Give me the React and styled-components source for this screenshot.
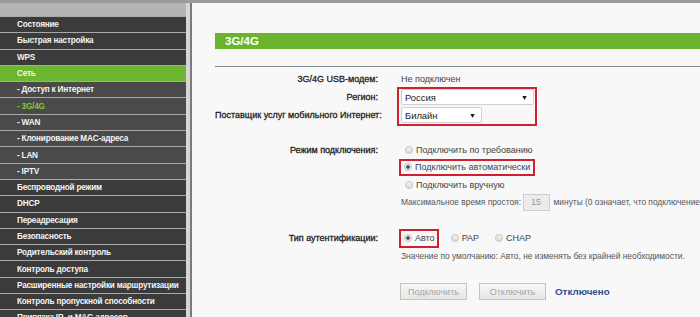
import React from 'react';
import styled, { createGlobalStyle } from 'styled-components';

const GlobalStyle = createGlobalStyle`
  html, body {
    margin: 0;
    padding: 0;
    width: 700px;
    height: 317px;
    overflow: hidden;
    background: #f8f8f8;
    font-family: "Liberation Sans", Arial, sans-serif;
  }
`;

const menu = [
  { label: 'Состояние' },
  { label: 'Быстрая настройка' },
  { label: 'WPS' },
  { label: 'Сеть', active: true },
  { label: '- Доступ к Интернет', sub: true },
  { label: '- 3G/4G', sub: true, current: true },
  { label: '- WAN', sub: true },
  { label: '- Клонирование MAC-адреса', sub: true },
  { label: '- LAN', sub: true },
  { label: '- IPTV', sub: true },
  { label: 'Беспроводной режим' },
  { label: 'DHCP' },
  { label: 'Переадресация' },
  { label: 'Безопасность' },
  { label: 'Родительский контроль' },
  { label: 'Контроль доступа' },
  { label: 'Расширенные настройки маршрутизации' },
  { label: 'Контроль пропускной способности' },
  { label: 'Привязка IP- и MAC-адресов' },
];

const App = () => {
  return (
    <Page>
      <GlobalStyle />
      <TopLine />
      <Body>
        <Sidebar>
          <SideHead />
          {menu.map((item, index) => (
            <MenuItem key={index} active={item.active} sub={item.sub} current={item.current}>
              {item.label}
            </MenuItem>
          ))}
        </Sidebar>
        <Gutter />
        <Content>
          <TitleBar>3G/4G</TitleBar>
          <Divider />

          {/* модем, регион, оператор */}
          <Form row={18}>
            <Label>3G/4G USB-модем:</Label>
            <Value>Не подключен</Value>
            <Label>Регион:</Label>
            <SelectBox>
              <Select width={133}>Россия<Arrow>▼</Arrow></Select>
              <Select width={81}>Билайн<Arrow>▼</Arrow></Select>
            </SelectBox>
            <Label>Поставщик услуг мобильного Интернет:</Label>
          </Form>

          {/* режим подключения */}
          <Form row={17.5} top={17}>
            <Label>Режим подключения:</Label>
            <Value>
              <Radio />Подключить по требованию
            </Value>
            <Value>
              <RedFrame>
                <Radio checked />Подключить автоматически
              </RedFrame>
            </Value>
            <Value>
              <Radio />Подключить вручную
            </Value>
            <Value>
              <Muted>Максимальное время простоя:</Muted>
              <Field>15</Field>
              <Muted>минуты (0 означает, что подключение</Muted>
            </Value>
          </Form>

          {/* аутентификация */}
          <Form row={18} top={18}>
            <Label>Тип аутентификации:</Label>
            <Value>
              <RedFrame tall>
                <Radio checked />Авто
              </RedFrame>
              <Choice><Radio />PAP</Choice>
              <Choice wide><Radio />CHAP</Choice>
            </Value>
            <Value>
              <Muted>Значение по умолчанию: Авто, не изменять без крайней необходимости.</Muted>
            </Value>
          </Form>

          <Actions>
            <Button>Подключить</Button>
            <Button>Отключить</Button>
            <Status>Отключено</Status>
          </Actions>
        </Content>
      </Body>
    </Page>
  );
};

const Page = styled.div`
  width: 700px;
  height: 317px;
  display: flex;
  flex-direction: column;
  overflow: hidden;
`;

const TopLine = styled.div`
  height: 3px;
  background: #9a9a9a;
  flex-shrink: 0;
`;

const Body = styled.div`
  display: flex;
  flex: 1;
  min-height: 0;
`;

const Sidebar = styled.div`
  width: 186px;
  flex-shrink: 0;
  background: #3a3a3a;
  display: flex;
  flex-direction: column;
`;

const SideHead = styled.div`
  height: 13px;
  background: #b4b4b4;
  flex-shrink: 0;
`;

const MenuItem = styled.div`
  height: 15.3px;
  flex-shrink: 0;
  border-top: 1px solid #a9a9a9;
  padding-left: 17px;
  display: flex;
  align-items: center;
  font-size: 8.2px;
  letter-spacing: -0.2px;
  font-weight: bold;
  white-space: nowrap;
  color: ${(p) => (p.current ? '#86c43c' : '#f4f4f4')};
  background: ${(p) => (p.active ? '#6cb630' : p.sub ? '#4a4a4a' : '#3b3b3b')};
`;

const Gutter = styled.div`
  width: 4px;
  flex-shrink: 0;
  background: #d6d6d6;
  border-right: 2px solid #7a7a7a;
`;

const Content = styled.div`
  flex: 1;
  padding: 30px 0 0 23px;
  background: #f8f8f8;
  color: #333;
  font-size: 9px;
  white-space: nowrap;
  overflow: hidden;
`;

const TitleBar = styled.div`
  height: 16px;
  background: #6ab42d;
  color: #fff;
  font-weight: bold;
  font-size: 11.5px;
  padding-left: 10px;
  display: flex;
  align-items: center;
`;

const Divider = styled.div`
  height: 1px;
  background: #7d8c8a;
  margin-top: 17px;
  margin-bottom: 3px;
`;

const Form = styled.div`
  display: grid;
  grid-template-columns: 163px 1fr;
  column-gap: 23px;
  grid-auto-rows: ${(p) => p.row}px;
  align-items: center;
  margin-top: ${(p) => p.top || 0}px;
`;

const Label = styled.div`
  grid-column: 1;
  text-align: right;
  color: #222;
  -webkit-text-stroke: 0.3px #222;
`;

const Value = styled.div`
  grid-column: 2;
  display: flex;
  align-items: center;
  min-width: 0;
  color: #444;
`;

const SelectBox = styled.div`
  grid-column: 2;
  grid-row: span 2;
  align-self: center;
  box-sizing: border-box;
  width: 140px;
  height: 39px;
  margin-left: -4px;
  border: 2px solid #d21f30;
  display: flex;
  flex-direction: column;
  justify-content: center;
  gap: 2px;
  padding-left: 2px;
`;

const Select = styled.div`
  box-sizing: border-box;
  width: ${(p) => p.width}px;
  height: 16px;
  background: #fff;
  border: 1px solid #cfcfcf;
  border-radius: 2px;
  padding-left: 3px;
  display: flex;
  align-items: center;
  justify-content: space-between;
  font-size: 9.4px;
  color: #222;
`;

const Arrow = styled.span`
  font-size: 7px;
  margin-right: 5px;
  color: #111;
`;

const RedFrame = styled.div`
  box-sizing: border-box;
  display: inline-flex;
  align-items: center;
  border: 2px solid #d21f30;
  height: ${(p) => (p.tall ? 19 : 17)}px;
  padding: 0 ${(p) => (p.tall ? 2 : 3)}px 0 0;
  margin-left: -2px;
  & > span:first-child {
    margin-left: 3px;
  }
`;

const Radio = styled.span`
  box-sizing: border-box;
  display: inline-block;
  width: 8px;
  height: 8px;
  border-radius: 50%;
  border: 1px solid #c4c4c4;
  background: ${(p) =>
    p.checked
      ? 'radial-gradient(circle, #555 0 1.5px, #e9e9e9 2.1px)'
      : 'linear-gradient(#f2f2f2, #dcdcdc)'};
  margin: 0 3px 0 4px;
  flex-shrink: 0;
`;

const Choice = styled.span`
  display: inline-flex;
  align-items: center;
  margin-left: ${(p) => (p.wide ? 12 : 8)}px;
`;

const Muted = styled.span`
  color: #555;
  font-size: 8.4px;
`;

const Field = styled.span`
  box-sizing: border-box;
  display: inline-flex;
  align-items: center;
  width: 36px;
  height: 17px;
  margin: 0 4px 0 2px;
  padding-left: 7px;
  background: #ececec;
  border: 1px solid #cdcdcd;
  color: #999;
`;

const Actions = styled.div`
  display: flex;
  align-items: center;
  gap: 12px;
  margin: 18px 0 0 185px;
`;

const Button = styled.div`
  box-sizing: border-box;
  width: 67px;
  height: 17px;
  display: flex;
  align-items: center;
  justify-content: center;
  background: linear-gradient(#f7f7f7, #e6e6e6);
  border: 1px solid #c3c3c3;
  color: #a5a5a5;
`;

const Status = styled.span`
  margin-left: -3px;
  color: #2d4f8e;
  font-weight: bold;
  font-size: 9.8px;
`;

export default App;
